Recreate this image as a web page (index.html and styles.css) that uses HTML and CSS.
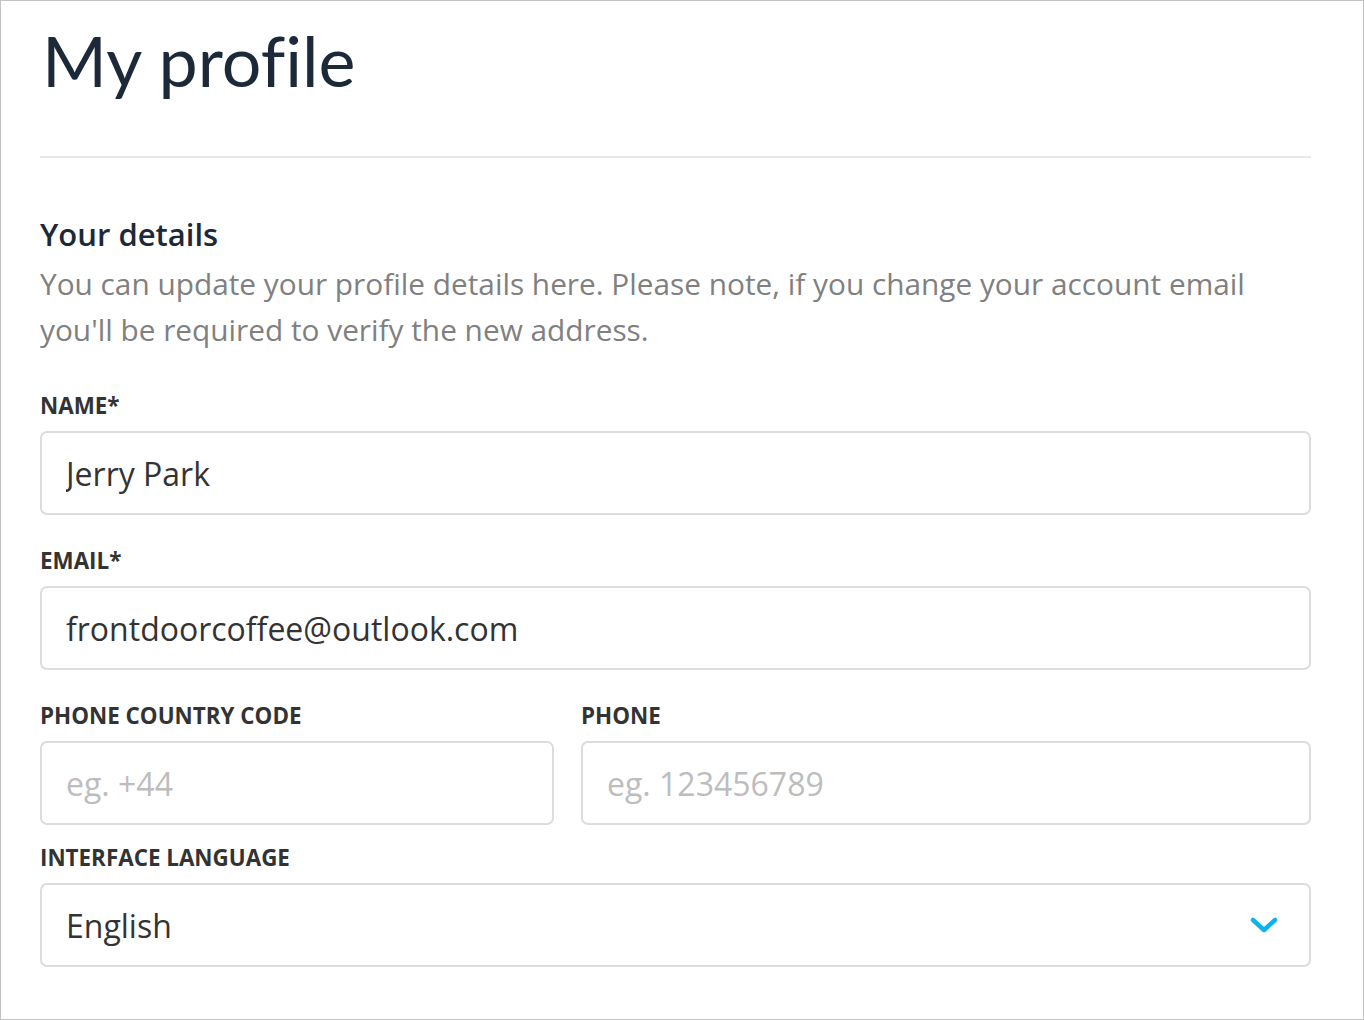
FILE: index.html
```html
<!DOCTYPE html>
<html lang="en">
<head>
<meta charset="utf-8">
<title>My profile</title>
<link rel="stylesheet" href="styles.css">
</head>
<body>
<div class="frame">
  <h1 class="page-title">My profile</h1>
  <hr class="divider">
  <section class="details">
    <h2 class="section-title">Your details</h2>
    <p class="section-desc">You can update your profile details here. Please note, if you change your account email you'll be required to verify the new address.</p>
    <form class="form">
      <div class="field">
        <label class="label" for="name">NAME*</label>
        <input class="input" id="name" type="text" value="Jerry Park">
      </div>
      <div class="field">
        <label class="label" for="email">EMAIL*</label>
        <input class="input" id="email" type="text" value="frontdoorcoffee@outlook.com">
      </div>
      <div class="field-row">
        <div class="field field-code">
          <label class="label" for="code">PHONE COUNTRY CODE</label>
          <input class="input" id="code" type="text" placeholder="eg. +44">
        </div>
        <div class="field field-phone">
          <label class="label" for="phone">PHONE</label>
          <input class="input" id="phone" type="text" placeholder="eg. 123456789">
        </div>
      </div>
      <div class="field">
        <label class="label" for="lang">INTERFACE LANGUAGE</label>
        <div class="select">
          <span class="select-value">English</span>
          <svg class="chevron" width="30" height="20" viewBox="0 0 30 20"><polyline points="3,4 14,14 25,4" fill="none" stroke="#0db3f0" stroke-width="4.5" stroke-linecap="round" stroke-linejoin="round"/></svg>
        </div>
      </div>
    </form>
  </section>
</div>
</body>
</html>
```
FILE: styles.css
```css
* { box-sizing: border-box; }
html, body { margin: 0; padding: 0; background: #fff; }
body { font-family: "Open Sans", "Noto Sans", sans-serif; }

.frame {
  width: 1364px;
  height: 1020px;
  border: 1px solid #c3c3c3;
  padding: 0 52px 0 39px;
  overflow: hidden;
}

.page-title {
  font-family: "Lato", "Open Sans", sans-serif;
  font-weight: 400;
  font-size: 70px;
  line-height: 86px;
  font-variant-ligatures: none;
  color: #1c2938;
  margin: 16px 0 0 2px;
}

.divider {
  border: 0;
  height: 2px;
  background: #e8e8e8;
  margin: 53px 0 0;
}

.section-title {
  font-size: 31px;
  line-height: 38px;
  font-weight: 600;
  color: #1c2938;
  margin: 57px 0 0;
}

.section-desc {
  font-size: 29.8px;
  line-height: 46px;
  color: #808080;
  margin: 8px 0 0;
}

.form { margin-top: 37px; }

.field { display: flex; flex-direction: column; margin-bottom: 30px; }
.field-row { display: flex; gap: 27px; }
.field-row .field { margin-bottom: 17px; }
.field-code { width: 514px; }
.field-phone { flex: 1; }

.label {
  font-size: 22.4px;
  line-height: 26px;
  padding-top: 3px;
  font-weight: 700;
  color: #333;
  margin-bottom: 12px;
}

.input, .select {
  height: 84px;
  width: 100%;
  border: 2px solid #dcdcdc;
  border-radius: 7px;
  padding: 0 24px;
  font-family: "Open Sans", "Noto Sans", sans-serif;
  font-size: 32px;
  color: #333;
  background: #fff;
  outline: none;
}
.input::placeholder { color: #bdbdbd; }

.select {
  display: flex;
  align-items: center;
  justify-content: space-between;
}
.select-value { color: #333; }
.chevron { margin-right: 5px; margin-top: 2px; }
```
